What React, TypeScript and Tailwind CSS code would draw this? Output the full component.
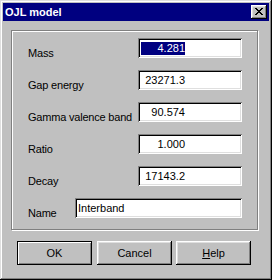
const fields = [
  { label: "Mass", value: "4.281", selected: true },
  { label: "Gap energy", value: "23271.3" },
  { label: "Gamma valence band", value: "90.574" },
  { label: "Ratio", value: "1.000" },
  { label: "Decay", value: "17143.2" },
];

const sunken =
  "bg-white shadow-[inset_1px_1px_#808080,inset_-1px_-1px_#ffffff,inset_2px_2px_#000000,inset_-2px_-2px_#dfdfdf]";

const CloseGlyph = () => (
  <svg width="8" height="7" viewBox="0 0 8 7" shapeRendering="crispEdges">
    <path
      fill="#000"
      d="M0 0h2v1H0zM6 0h2v1H6zM1 1h2v1H1zM5 1h2v1H5zM2 2h4v1H2zM3 3h2v1H3zM2 4h4v1H2zM1 5h2v1H1zM5 5h2v1H5zM0 6h2v1H0zM6 6h2v1H6z"
    />
  </svg>
);

const App = () => {
  return (
    <div
      className="flex h-[280px] w-[272px] flex-col bg-[#c0c0c0] p-[3px] text-[11px] leading-[13px] text-black shadow-[inset_-1px_-1px_#000000,inset_1px_1px_#dfdfdf,inset_-2px_-2px_#808080,inset_2px_2px_#ffffff]"
      style={{ fontFamily: '"Liberation Sans", Arial, sans-serif' }}
    >
      {/* title bar */}
      <div className="flex h-[18px] items-center justify-between bg-[#000080] pl-[2px] pr-[2px]">
        <span className="font-bold text-white">OJL model</span>
        <div className="flex h-[14px] w-[16px] items-center justify-center bg-[#c0c0c0] pb-px shadow-[inset_-1px_-1px_#000000,inset_1px_1px_#ffffff,inset_-2px_-2px_#808080,inset_2px_2px_#dfdfdf]">
          <CloseGlyph />
        </div>
      </div>

      {/* group box */}
      <div className="ml-[8px] mt-[9px] h-[200px] w-[247px] border border-[#808080] shadow-[1px_1px_#ffffff,inset_1px_1px_#ffffff]">
        <div className="flex flex-col gap-[12px] pl-[16px] pt-[7px]">
          {fields.map((f) => (
            <div key={f.label} className="flex h-[20px]">
              <span className="mt-[9px] w-[110px] whitespace-nowrap tracking-[-0.2px]">
                {f.label}
              </span>
              <div className={`flex h-[20px] w-[104px] items-center pl-[3px] ${sunken}`}>
                <span
                  className={`w-[44px] text-right ${
                    f.selected ? "bg-[#000080] text-white" : ""
                  }`}
                >
                  {f.value}
                </span>
              </div>
            </div>
          ))}
          <div className="flex h-[20px]">
            <span className="mt-[9px] w-[47px] tracking-[-0.2px]">Name</span>
            <div className={`flex h-[20px] w-[167px] items-center pl-[3px] ${sunken}`}>
              <span>Interband</span>
            </div>
          </div>
        </div>
      </div>

      {/* buttons */}
      <div className="ml-[14px] mt-[11px] flex">
        <button className="flex h-[24px] w-[75px] items-center justify-center border border-black bg-[#c0c0c0] shadow-[inset_1px_1px_#ffffff,inset_-1px_-1px_#808080]">
          OK
        </button>
        <button className="ml-[5px] flex h-[24px] w-[75px] items-center justify-center bg-[#c0c0c0] shadow-[inset_-1px_-1px_#000000,inset_1px_1px_#ffffff,inset_-2px_-2px_#808080,inset_2px_2px_#dfdfdf]">
          Cancel
        </button>
        <button className="ml-[4px] flex h-[24px] w-[75px] items-center justify-center bg-[#c0c0c0] shadow-[inset_-1px_-1px_#000000,inset_1px_1px_#ffffff,inset_-2px_-2px_#808080,inset_2px_2px_#dfdfdf]">
          <span>
            <span className="underline">H</span>elp
          </span>
        </button>
      </div>
    </div>
  );
};

export default App;
